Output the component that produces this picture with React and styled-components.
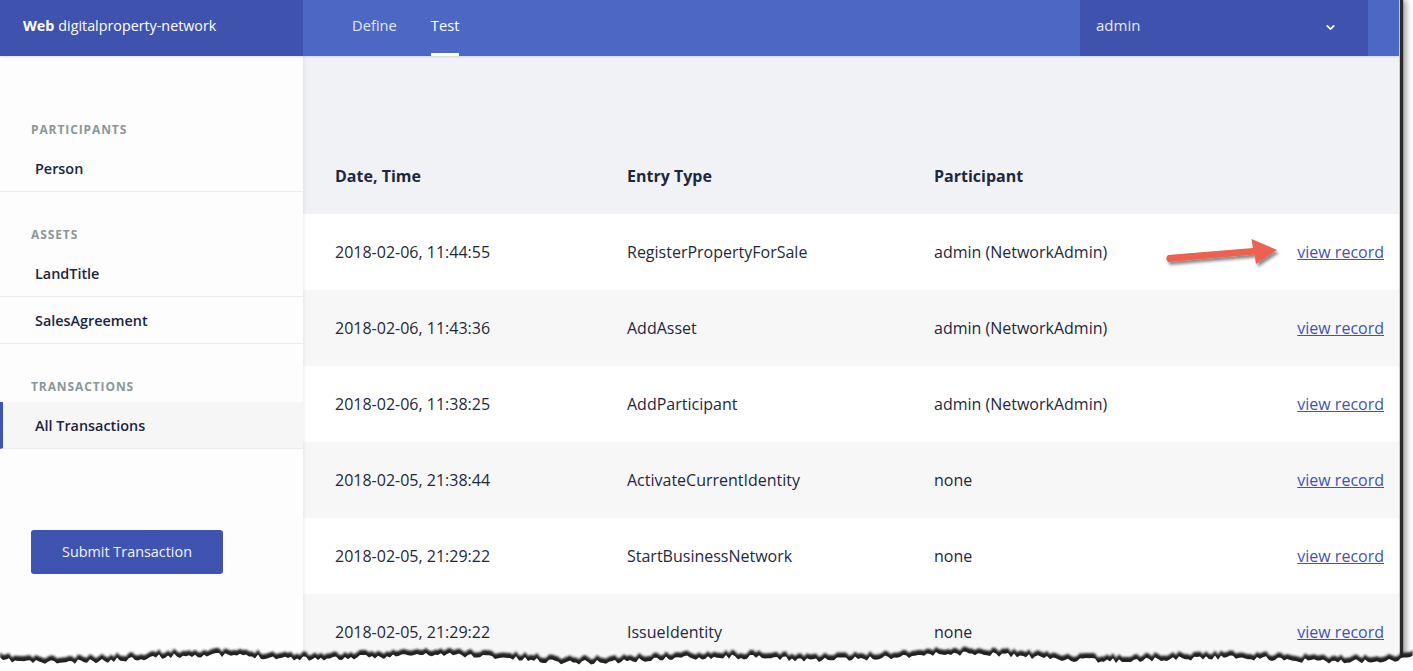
import React from "react";
import styled, { createGlobalStyle } from "styled-components";
import { ChevronDown } from "lucide-react";

const GlobalStyle = createGlobalStyle`
  html, body { margin: 0; padding: 0; background: #fff; }
  body { font-family: "Open Sans", "Liberation Sans", sans-serif; }
  * { box-sizing: border-box; }
`;

const Frame = styled.div`
  position: relative;
  width: 1413px;
  height: 671px;
  overflow: hidden;
  background: #fff;
`;

const Window = styled.div`
  width: 1400px;
  height: 671px;
  display: flex;
  flex-direction: column;
  border-right: 1px solid #cfcfcf;
  box-shadow: 3px 0 1px #2b2b2b, 6px 0 6px rgba(0, 0, 0, 0.4);
`;

const Header = styled.header`
  height: 56px;
  flex-shrink: 0;
  display: flex;
  background: #4d67c4;
  position: relative;
  z-index: 2;
  box-shadow: 0 1px 2px rgba(0, 0, 0, 0.12);
`;

const Brand = styled.div`
  width: 303px;
  display: flex;
  align-items: center;
  padding: 0 0 6px 23px;
  background: #3f53ae;
  color: #fff;
  font-size: 14.3px;
  b {
    font-weight: 700;
    margin-right: 4px;
  }
`;

const Nav = styled.nav`
  display: flex;
  gap: 34px;
  padding-left: 49px;
`;

const Tab = styled.a`
  display: flex;
  align-items: center;
  height: 100%;
  padding-bottom: 3px;
  border-bottom: 3px solid ${(p) => (p.$active ? "#fff" : "transparent")};
  color: ${(p) => (p.$active ? "#fff" : "#e2e7f7")};
  font-size: 14.7px;
  cursor: pointer;
`;

const UserMenu = styled.div`
  margin-left: auto;
  margin-right: 31px;
  width: 288px;
  display: flex;
  align-items: center;
  justify-content: space-between;
  padding: 0 31px 6px 16px;
  background: #3f53ae;
  color: #e6eaf7;
  font-size: 15px;
  svg {
    margin-top: 4px;
  }
`;

const Body = styled.div`
  flex: 1;
  display: flex;
  min-height: 0;
`;

const Sidebar = styled.aside`
  width: 303px;
  flex-shrink: 0;
  background: #fdfdfd;
  padding-top: 65px;
  position: relative;
  z-index: 1;
  box-shadow: 2px 0 3px rgba(0, 0, 0, 0.05);
`;

const Section = styled.div`
  & + & {
    margin-top: 34px;
  }
`;

const SectionLabel = styled.div`
  padding-left: 31px;
  height: 16px;
  line-height: 17px;
  margin-bottom: 8px;
  font-size: 12px;
  font-weight: 700;
  letter-spacing: 0.9px;
  color: #8b9797;
  text-transform: uppercase;
`;

const Item = styled.div`
  height: 47px;
  display: flex;
  align-items: center;
  padding-left: ${(p) => (p.$active ? "32px" : "35px")};
  border-bottom: 1px solid #ececee;
  border-left: ${(p) => (p.$active ? "3px solid #3f53b2" : "none")};
  background: ${(p) => (p.$active ? "#f6f6f7" : "transparent")};
  font-size: 14.4px;
  font-weight: 600;
  color: #1b2440;
`;

const SubmitButton = styled.button`
  margin: 81px 0 0 31px;
  width: 192px;
  height: 44px;
  border: none;
  border-radius: 3px;
  background: #3f53b0;
  color: #f2f4fb;
  font-family: "Open Sans", "Liberation Sans", sans-serif;
  font-size: 14.4px;
  padding-bottom: 2px;
  cursor: pointer;
`;

const Main = styled.main`
  flex: 1;
  background: #f1f2f6;
  padding-top: 84px;
  overflow: hidden;
`;

const Row = styled.div`
  display: grid;
  grid-template-columns: 292px 307px 1fr auto;
  align-items: center;
  height: ${(p) => (p.$head ? "74px" : "76px")};
  padding: 0 15px ${(p) => (p.$head ? "2px" : "0")} 32px;
  background: ${(p) => (p.$head ? "transparent" : p.$odd ? "#f7f7f8" : "#ffffff")};
  color: #1f2740;
  font-size: 16px;
  font-weight: ${(p) => (p.$head ? 700 : 400)};
`;

const RecordLink = styled.a`
  color: #3f53b2;
  text-decoration: underline;
  cursor: pointer;
`;

const Overlay = styled.svg`
  position: absolute;
  z-index: 5;
  left: ${(p) => p.$x}px;
  top: ${(p) => p.$y}px;
  pointer-events: none;
`;

const rows = [
  ["2018-02-06, 11:44:55", "RegisterPropertyForSale", "admin (NetworkAdmin)"],
  ["2018-02-06, 11:43:36", "AddAsset", "admin (NetworkAdmin)"],
  ["2018-02-06, 11:38:25", "AddParticipant", "admin (NetworkAdmin)"],
  ["2018-02-05, 21:38:44", "ActivateCurrentIdentity", "none"],
  ["2018-02-05, 21:29:22", "StartBusinessNetwork", "none"],
  ["2018-02-05, 21:29:22", "IssueIdentity", "none"],
];

// jagged bottom edge of the cut screenshot
function tornPath(offset) {
  let seed = 11;
  const rand = () => {
    seed = (seed * 16807) % 2147483647;
    return seed / 2147483647;
  };
  const pts = [];
  for (let x = 0; x <= 1413; x += 3) {
    const y =
      13 +
      2.5 * Math.sin(x / 41) +
      2 * Math.sin(x / 97 + 1.3) +
      (rand() - 0.5) * 5 +
      offset;
    pts.push(`${x},${y.toFixed(1)}`);
  }
  return `M0,40 L${pts.join(" L")} L1413,40 Z`;
}

const Arrow = () => (
  <Overlay $x={1160} $y={234} width="130" height="40" viewBox="0 0 130 40">
    <defs>
      <filter id="arrowShadow" x="-20%" y="-40%" width="140%" height="200%">
        <feDropShadow dx="2" dy="3" stdDeviation="1.6" floodColor="#000" floodOpacity="0.45" />
      </filter>
    </defs>
    <path
      d="M8,21 L93,14 L91.5,5 L117,16 L96,30 L94.5,20.5 L8,28 Q4.5,24.5 8,21 Z"
      fill="#ee6150"
      filter="url(#arrowShadow)"
    />
  </Overlay>
);

const TornEdge = () => (
  <Overlay $x={0} $y={640} width="1413" height="31" viewBox="0 0 1413 31">
    <defs>
      <filter id="tornBlur" x="-5%" y="-50%" width="110%" height="200%">
        <feGaussianBlur stdDeviation="1.3" />
      </filter>
    </defs>
    <path d={tornPath(0)} fill="#222" filter="url(#tornBlur)" />
    <path d={tornPath(5)} fill="#ffffff" />
  </Overlay>
);

export default function App() {
  return (
    <>
      <GlobalStyle />
      <Frame>
        <Window>
          <Header>
            <Brand>
              <b>Web</b>digitalproperty-network
            </Brand>
            <Nav>
              <Tab>Define</Tab>
              <Tab $active>Test</Tab>
            </Nav>
            <UserMenu>
              admin
              <ChevronDown size={13} strokeWidth={3.2} color="#fff" />
            </UserMenu>
          </Header>
          <Body>
            <Sidebar>
              <Section>
                <SectionLabel>Participants</SectionLabel>
                <Item>Person</Item>
              </Section>
              <Section>
                <SectionLabel>Assets</SectionLabel>
                <Item>LandTitle</Item>
                <Item>SalesAgreement</Item>
              </Section>
              <Section>
                <SectionLabel>Transactions</SectionLabel>
                <Item $active>All Transactions</Item>
              </Section>
              <SubmitButton>Submit Transaction</SubmitButton>
            </Sidebar>
            <Main>
              <Row $head>
                <span>Date, Time</span>
                <span>Entry Type</span>
                <span>Participant</span>
                <span />
              </Row>
              {rows.map((r, i) => (
                <Row key={i} $odd={i % 2 === 1}>
                  <span>{r[0]}</span>
                  <span>{r[1]}</span>
                  <span>{r[2]}</span>
                  <RecordLink>view record</RecordLink>
                </Row>
              ))}
            </Main>
          </Body>
        </Window>
        <Arrow />
        <TornEdge />
      </Frame>
    </>
  );
}
